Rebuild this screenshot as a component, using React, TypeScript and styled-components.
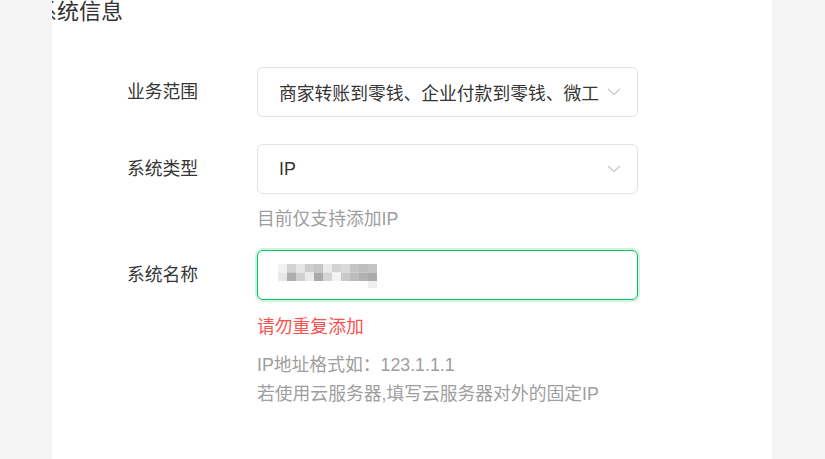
import * as React from 'react';
import styled, { createGlobalStyle } from 'styled-components';

const GlobalStyle = createGlobalStyle`
  html, body {
    margin: 0;
    padding: 0;
    background: #f5f5f5;
  }
  body {
    font-family: "Liberation Sans", "Noto Sans CJK SC", sans-serif;
  }
`;

const mosaic = [
  ['#f2f2f2', '#d2d2d2', '#e6e6e6', '#cdcdcd', '#c6c6c6', '#ebebeb', '#d3d3d3', '#dadada', '#c4c4c4', '#bdbdbd', '#c3c3c3'],
  ['#e8e8e8', '#aeaeae', '#d0d0d0', '#ebebeb', '#a9a9a9', '#d4d4d4', '#f3f3f3', '#cacaca', '#bcbcbc', '#b2b2b2', '#aaaaaa'],
];

export default function App() {
  return (
    <>
      <GlobalStyle />
      <Page>
        <Panel>
          <Title>系统信息</Title>
          <Form>
            <Row $gap={27}>
              <Label>业务范围</Label>
              <Control>
                <Select>
                  <SelectValue>商家转账到零钱、企业付款到零钱、微工卡、分账</SelectValue>
                  <Chevron />
                </Select>
              </Control>
            </Row>
            <Row $gap={17}>
              <Label>系统类型</Label>
              <Control>
                <Select>
                  <SelectValue>IP</SelectValue>
                  <Chevron />
                </Select>
                <Hint>目前仅支持添加IP</Hint>
              </Control>
            </Row>
            <Row $gap={0}>
              <Label>系统名称</Label>
              <Control>
                <Input $focused>
                  <Blurred />
                </Input>
                <ErrorText>请勿重复添加</ErrorText>
                <Tips>
                  <div>IP地址格式如：123.1.1.1</div>
                  <div>若使用云服务器,填写云服务器对外的固定IP</div>
                </Tips>
              </Control>
            </Row>
          </Form>
        </Panel>
      </Page>
    </>
  );
}

function Chevron() {
  return (
    <ChevronIcon width="14" height="8" viewBox="0 0 14 8">
      <path d="M1 1 L7 6.5 L13 1" fill="none" stroke="#c4c4c4" strokeWidth="1.1" />
    </ChevronIcon>
  );
}

function Blurred() {
  return (
    <MosaicSvg width="102" height="26" viewBox="0 0 102 26">
      {mosaic.map((row, r) =>
        row.map((c, i) => <rect key={`${r}-${i}`} x={i * 9} y={r * 8.5} width="9" height="8.5" fill={c} />)
      )}
      <rect x={90} y={17} width="9" height="7" fill="#eeeeee" />
    </MosaicSvg>
  );
}

const Page = styled.div`
  width: 825px;
  height: 459px;
  display: flex;
  overflow: hidden;
`;

const Panel = styled.div`
  margin-left: 52px;
  width: 720px;
  height: 459px;
  background: #ffffff;
  overflow: hidden;
  padding-left: 75px;
  box-sizing: border-box;
`;

const Title = styled.div`
  margin-left: -92px;
  font-size: 22px;
  line-height: 24px;
  color: #333333;
  white-space: nowrap;
`;

const Form = styled.div`
  margin-top: 43px;
  display: flex;
  flex-direction: column;
`;

const Row = styled.div<{ $gap: number }>`
  display: grid;
  grid-template-columns: 130px 381px;
  align-items: start;
  margin-bottom: ${p => p.$gap}px;
`;

const Label = styled.div`
  height: 50px;
  line-height: 50px;
  font-size: 17.8px;
  color: #353535;
`;

const Control = styled.div`
  display: flex;
  flex-direction: column;
`;

const Select = styled.div`
  height: 50px;
  box-sizing: border-box;
  border: 1px solid #e3e3e3;
  border-radius: 6px;
  padding: 0 16px 0 21px;
  display: flex;
  align-items: center;
  gap: 8px;
  background: #fff;
`;

const SelectValue = styled.div`
  flex: 1;
  min-width: 0;
  overflow: hidden;
  white-space: nowrap;
  font-size: 17.8px;
  color: #353535;
`;

const ChevronIcon = styled.svg`
  flex: none;
`;

const Input = styled.div<{ $focused?: boolean }>`
  height: 50px;
  box-sizing: border-box;
  border: 1px solid ${p => (p.$focused ? '#07c160' : '#e3e3e3')};
  box-shadow: ${p => (p.$focused ? '0 0 0 2px rgba(7, 193, 96, 0.18)' : 'none')};
  border-radius: 6px;
  padding: 0 0 0 20px;
  display: flex;
  align-items: center;
`;

const MosaicSvg = styled.svg`
  margin-top: 4px;
`;

const Hint = styled.div`
  margin-top: 11px;
  line-height: 28px;
  font-size: 17.8px;
  color: #9e9e9e;
  white-space: nowrap;
`;

const ErrorText = styled.div`
  margin-top: 13px;
  line-height: 28px;
  font-size: 17.8px;
  color: #fa5151;
`;

const Tips = styled.div`
  margin-top: 10px;
  line-height: 29px;
  font-size: 17.8px;
  color: #9e9e9e;
  white-space: nowrap;
`;
